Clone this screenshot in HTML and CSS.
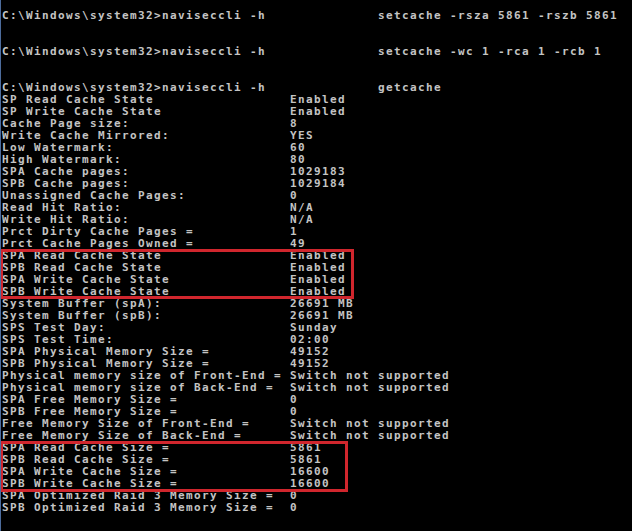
FILE: index.html
```html
<!DOCTYPE html>
<html>
<head>
<meta charset="utf-8">
<link rel="stylesheet" href="styles.css">
</head>
<body>
<div class="console">
  <div class="line"><span class="cmd">C:\Windows\system32&gt;naviseccli -h</span>setcache -rsza 5861 -rszb 5861</div>
  <div class="line"></div>
  <div class="line"></div>
  <div class="line"><span class="cmd">C:\Windows\system32&gt;naviseccli -h</span>setcache -wc 1 -rca 1 -rcb 1</div>
  <div class="line"></div>
  <div class="line"></div>
  <div class="line"><span class="cmd">C:\Windows\system32&gt;naviseccli -h</span>getcache</div>
  <div class="line"><span class="k">SP Read Cache State</span>Enabled</div>
  <div class="line"><span class="k">SP Write Cache State</span>Enabled</div>
  <div class="line"><span class="k">Cache Page size:</span>8</div>
  <div class="line"><span class="k">Write Cache Mirrored:</span>YES</div>
  <div class="line"><span class="k">Low Watermark:</span>60</div>
  <div class="line"><span class="k">High Watermark:</span>80</div>
  <div class="line"><span class="k">SPA Cache pages:</span>1029183</div>
  <div class="line"><span class="k">SPB Cache pages:</span>1029184</div>
  <div class="line"><span class="k">Unassigned Cache Pages:</span>0</div>
  <div class="line"><span class="k">Read Hit Ratio:</span>N/A</div>
  <div class="line"><span class="k">Write Hit Ratio:</span>N/A</div>
  <div class="line"><span class="k">Prct Dirty Cache Pages =</span>1</div>
  <div class="line"><span class="k">Prct Cache Pages Owned =</span>49</div>
  <div class="mark mark-state">
    <div class="line"><span class="k">SPA Read Cache State</span>Enabled</div>
    <div class="line"><span class="k">SPB Read Cache State</span>Enabled</div>
    <div class="line"><span class="k">SPA Write Cache State</span>Enabled</div>
    <div class="line"><span class="k">SPB Write Cache State</span>Enabled</div>
  </div>
  <div class="line"><span class="k">System Buffer (spA):</span>26691 MB</div>
  <div class="line"><span class="k">System Buffer (spB):</span>26691 MB</div>
  <div class="line"><span class="k">SPS Test Day:</span>Sunday</div>
  <div class="line"><span class="k">SPS Test Time:</span>02:00</div>
  <div class="line"><span class="k">SPA Physical Memory Size =</span>49152</div>
  <div class="line"><span class="k">SPB Physical Memory Size =</span>49152</div>
  <div class="line"><span class="k">Physical memory size of Front-End =</span>Switch not supported</div>
  <div class="line"><span class="k">Physical memory size of Back-End =</span>Switch not supported</div>
  <div class="line"><span class="k">SPA Free Memory Size =</span>0</div>
  <div class="line"><span class="k">SPB Free Memory Size =</span>0</div>
  <div class="line"><span class="k">Free Memory Size of Front-End =</span>Switch not supported</div>
  <div class="line"><span class="k">Free Memory Size of Back-End =</span>Switch not supported</div>
  <div class="mark mark-size">
    <div class="line"><span class="k">SPA Read Cache Size =</span>5861</div>
    <div class="line"><span class="k">SPB Read Cache Size =</span>5861</div>
    <div class="line"><span class="k">SPA Write Cache Size =</span>16600</div>
    <div class="line"><span class="k">SPB Write Cache Size =</span>16600</div>
  </div>
  <div class="line"><span class="k">SPA Optimized Raid 3 Memory Size =</span>0</div>
  <div class="line"><span class="k">SPB Optimized Raid 3 Memory Size =</span>0</div>
</div>
</body>
</html>
```
FILE: styles.css
```css
html, body {
  margin: 0;
  padding: 0;
  background: #000;
}

.console {
  width: 632px;
  height: 531px;
  box-sizing: border-box;
  background: #000;
  border-left: 1px solid #4d6c9c;
  padding: 10px 0 0 1px;
  overflow: hidden;
}

.line {
  height: 12px;
  line-height: 12px;
  white-space: pre;
  font-family: "DejaVu Sans Mono", monospace;
  font-weight: bold;
  font-size: 11px;
  letter-spacing: 1.378px;
  color: #c4c4c4;
}

.cmd {
  display: inline-block;
  width: 376px;
}

.k {
  display: inline-block;
  width: 288px;
}

.mark {
  position: relative;
}

.mark::after {
  content: "";
  position: absolute;
  left: -2px;
  box-sizing: border-box;
  border: 3px solid #d0262d;
}

.mark-state::after {
  top: -1px;
  bottom: -1px;
  width: 354px;
}

.mark-size::after {
  top: -1px;
  bottom: -2px;
  width: 348px;
}
```
